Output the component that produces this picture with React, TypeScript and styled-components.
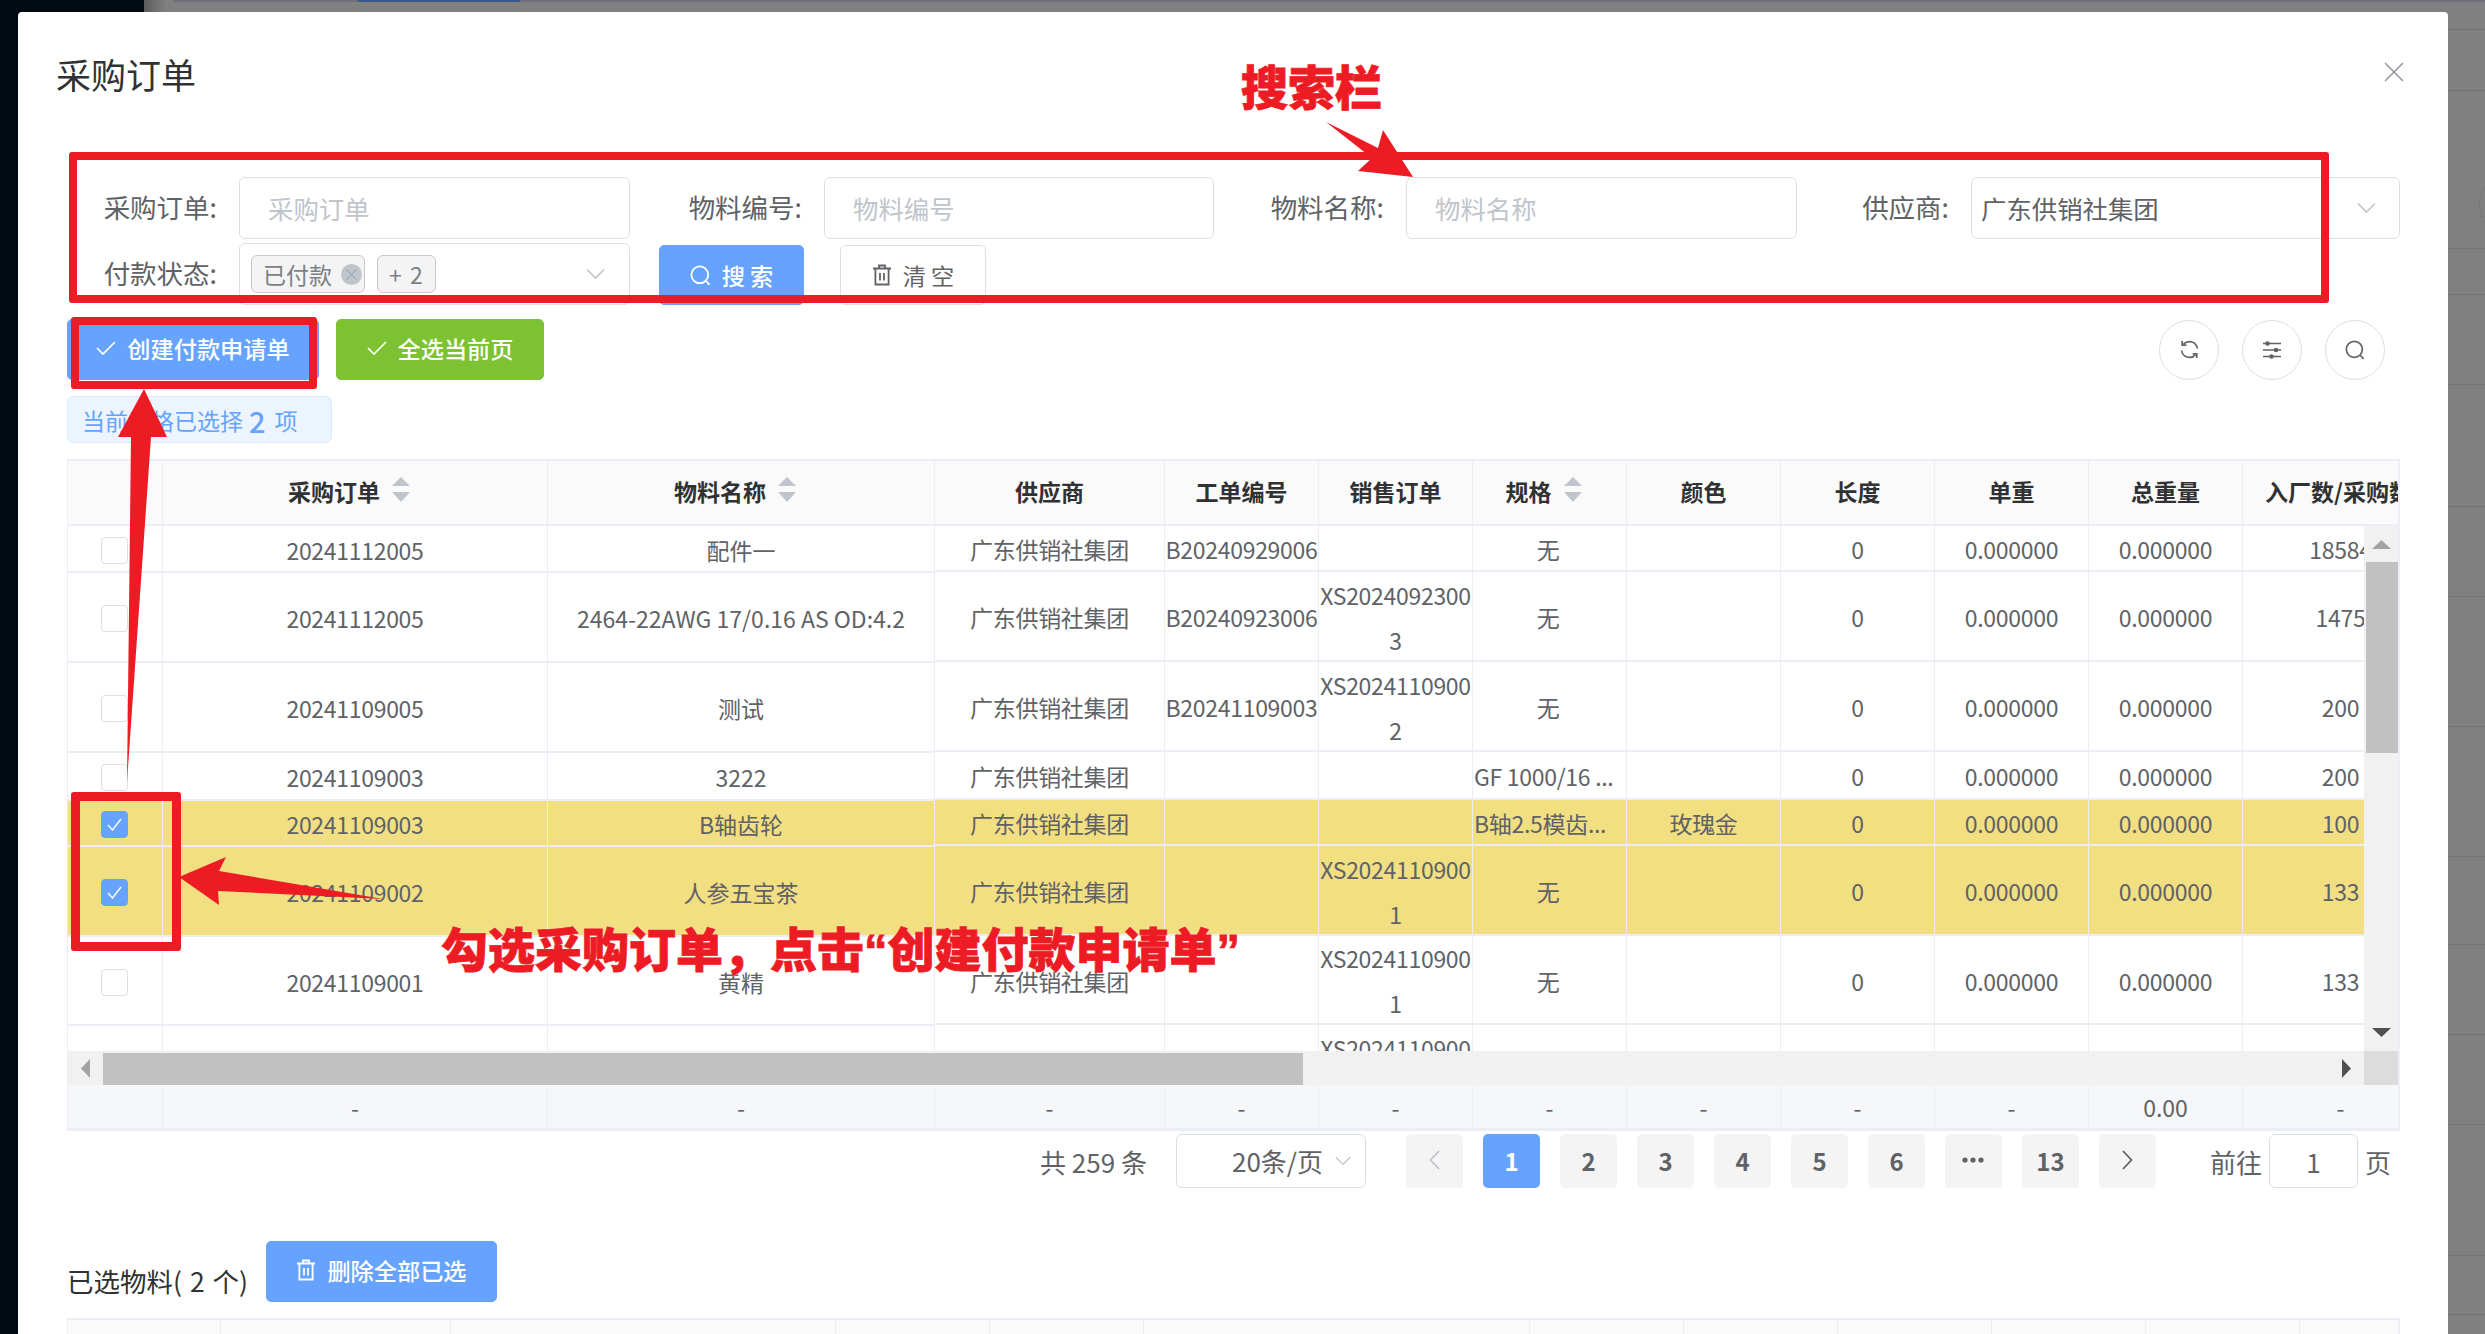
import React from "react";
import styled, { createGlobalStyle } from "styled-components";

const BLUE = "#66a3ff";
const LINE = "#ebeef5";
const TEXT = "#606266";
const RED = "#ed1c24";

const Global = createGlobalStyle`
  html, body { margin: 0; padding: 0; }
  body { font-family: "Noto Sans CJK SC", "Noto Sans", sans-serif; }
  * { box-sizing: border-box; }
`;

const Page = styled.div`
  position: relative;
  width: 2485px;
  height: 1334px;
  overflow: hidden;
  background: #808080;
`;
const DarkSide = styled.div`
  position: absolute;
  left: 0;
  top: 0;
  bottom: 0;
  width: 144px;
  background: #020a13;
`;
const SideShade = styled.div`
  position: absolute;
  left: 144px;
  top: 0;
  bottom: 0;
  width: 22px;
  background: linear-gradient(90deg, #5c5c5c, #808080);
`;
const TopStrip = styled.div`
  position: absolute;
  left: 173px;
  right: 0;
  top: 0;
  height: 2px;
  background: #6f6f78;
`;
const TopTab = styled.div`
  position: absolute;
  left: 358px;
  top: 0;
  width: 162px;
  height: 2px;
  background: #3a588c;
`;
const RightRows = styled.div`
  position: absolute;
  left: 2448px;
  right: 0;
  top: 0;
  display: flex;
  flex-direction: column;
`;
const RightRow = styled.div<{ $h: number }>`
  height: ${(p) => p.$h}px;
  border-bottom: 1px solid #737373;
`;
const GhostCircle = styled.div`
  position: absolute;
  left: 2479px;
  top: 175px;
  width: 60px;
  height: 60px;
  border-radius: 50%;
  border: 1px solid #757575;
`;

const Modal = styled.div`
  position: absolute;
  left: 18px;
  top: 12px;
  right: 37px;
  bottom: 0;
  background: #fff;
  border-radius: 4px 4px 0 0;
  padding: 0 48px 0 49px;
  overflow: hidden;
  display: flex;
  flex-direction: column;
`;
const ModalHeader = styled.div`
  flex: none;
  height: 165px;
  padding-top: 38px;
  display: flex;
  justify-content: space-between;
  align-items: flex-start;
`;
const Title = styled.h2`
  margin: 0 0 0 -11px;
  font-size: 35px;
  line-height: 48px;
  font-weight: 400;
  color: #303133;
`;
const CloseBtn = styled.button`
  margin: 12px -5px 0 0;
  padding: 0;
  border: 0;
  background: none;
  width: 21px;
  height: 21px;
  color: #909399;
  display: flex;
`;

const SearchForm = styled.form`
  flex: none;
  margin: 0;
  display: flex;
  flex-direction: column;
  gap: 4px;
`;
const FormRow = styled.div`
  display: flex;
  align-items: flex-end;
  height: 62px;
`;
const Field = styled.div<{ $w: number }>`
  width: ${(p) => p.$w}px;
  height: 62px;
  display: flex;
  align-items: center;
  flex: none;
`;
const FieldLabel = styled.label`
  flex: 1;
  text-align: right;
  padding: 0 22px 3px 0;
  font-size: 26.5px;
  color: ${TEXT};
  white-space: nowrap;
`;
const Control = styled.div<{ $w: number }>`
  flex: none;
  width: ${(p) => p.$w}px;
  height: 62px;
  border: 1.5px solid #dcdfe6;
  border-radius: 6px;
  background: #fff;
  font-size: 25.4px;
  display: flex;
  align-items: center;
  position: relative;
`;
const Placeholder = styled.span`
  padding-left: 28px;
  color: #c0c4cc;
`;
const SelectValue = styled.span`
  padding-left: 9px;
  color: ${TEXT};
  flex: 1;
`;
const Chevron = styled.span<{ $right: number }>`
  display: flex;
  position: absolute;
  right: ${(p) => p.$right}px;
  top: 50%;
  transform: translateY(-50%);
  color: #c0c4cc;
`;
const Tags = styled.div`
  display: flex;
  gap: 12px;
  padding-left: 11px;
`;
const Tag = styled.span`
  height: 38px;
  padding: 0 12px 0 11px;
  background: #f4f4f5;
  border: 1.5px solid #c8c9cc;
  border-radius: 6px;
  font-size: 23px;
  word-spacing: 3px;
  color: #7d7f86;
  display: flex;
  align-items: center;
  gap: 9px;
`;
const TagClose = styled.span`
  width: 21px;
  height: 21px;
  margin-right: -10px;
  border-radius: 50%;
  background: #c0c4cc;
  color: #909399;
  display: flex;
  align-items: center;
  justify-content: center;
`;

const Btn = styled.button<{ $bg: string; $fg?: string; $border?: string; $w: number }>`
  flex: none;
  width: ${(p) => p.$w}px;
  height: 61px;
  background: ${(p) => p.$bg};
  color: ${(p) => p.$fg ?? "#fff"};
  border: 1.5px solid ${(p) => p.$border ?? p.$bg};
  border-radius: 5px;
  font-family: inherit;
  font-size: 23.2px;
  font-weight: 500;
  padding: 0 0 3px;
  display: flex;
  align-items: center;
  justify-content: center;
  gap: 11px;
`;
const SearchBtn = styled(Btn)`
  margin-left: 29px;
  height: 60px;
  padding: 0;
`;
const ClearBtn = styled(Btn)`
  margin-left: 36px;
  height: 60px;
  padding: 0;
  font-weight: 400;
`;

const Toolbar = styled.div`
  flex: none;
  margin-top: 14px;
  height: 61px;
  display: flex;
  align-items: center;
  gap: 17px;
`;
const ToolIcons = styled.div`
  margin-left: auto;
  margin-right: 15px;
  display: flex;
  gap: 23px;
`;
const RoundBtn = styled.button`
  width: 60px;
  height: 60px;
  padding: 0;
  background: #fff;
  border: 1.5px solid #dcdfe6;
  border-radius: 50%;
  color: ${TEXT};
  display: flex;
  align-items: center;
  justify-content: center;
`;

const SelectedBadge = styled.div`
  flex: none;
  align-self: flex-start;
  margin-top: 16px;
  width: 265px;
  height: 47px;
  padding-left: 14px;
  background: #ecf5ff;
  border: 1.5px solid #d9ecff;
  border-radius: 6px;
  color: ${BLUE};
  font-size: 23px;
  display: flex;
  align-items: center;
  white-space: nowrap;
`;
const BadgeNum = styled.b`
  font-size: 29px;
  font-weight: 500;
  margin: 0 9px 0 6px;
`;

const TableWrap = styled.div`
  flex: none;
  margin-top: 16px;
  border-top: 2px solid ${LINE};
  border-left: 1px solid ${LINE};
  border-right: 2px solid ${LINE};
`;
const HeadRow = styled.div`
  display: flex;
  height: 65px;
  overflow: hidden;
  background: #fafafa;
  border-bottom: 2px solid ${LINE};
`;
const HeadCell = styled.div<{ $w: number }>`
  flex: none;
  width: ${(p) => p.$w}px;
  border-right: 1px solid ${LINE};
  padding-bottom: 3px;
  font-size: 23px;
  font-weight: 700;
  color: #303133;
  display: flex;
  align-items: center;
  justify-content: center;
  gap: 12px;
  white-space: nowrap;
  overflow: hidden;
`;
const SortHeadCell = styled(HeadCell)`
  padding-right: 12px;
`;
const LastHeadCell = styled(HeadCell)`
  justify-content: flex-start;
  padding-left: 22px;
`;
const Carets = styled.span`
  display: flex;
  flex-direction: column;
  gap: 6px;
  margin-top: -3px;
`;
const BodyArea = styled.div`
  display: flex;
  height: 525px;
`;
const Pane = styled.div<{ $w: number }>`
  flex: none;
  width: ${(p) => p.$w}px;
  overflow: hidden;
  display: flex;
  flex-direction: column;
`;
const Row = styled.div<{ $h: number; $on?: boolean }>`
  flex: none;
  display: flex;
  height: ${(p) => p.$h}px;
  background: ${(p) => (p.$on ? "#f2df82" : "#fff")};
  border-bottom: 2px solid ${LINE};
`;
const Cell = styled.div<{ $w: number; $left?: boolean }>`
  flex: none;
  width: ${(p) => p.$w}px;
  border-right: 1px solid ${LINE};
  padding: 3px ${(p) => (p.$left ? "0 0 1px" : "0 0")};
  font-size: 23px;
  line-height: 45px;
  color: ${TEXT};
  display: flex;
  flex-direction: column;
  align-items: ${(p) => (p.$left ? "flex-start" : "center")};
  justify-content: center;
  white-space: nowrap;
  overflow: hidden;
  letter-spacing: -0.3px;
`;
const NameCell = styled(Cell)`
  letter-spacing: 0;
`;
const SpecCell = styled(Cell)`
  padding-right: 3px;
`;
const CheckBox = styled.span<{ $on?: boolean }>`
  width: 27px;
  height: 27px;
  margin-right: 1px;
  border: 1.5px solid ${(p) => (p.$on ? BLUE : "#dcdfe6")};
  background: ${(p) => (p.$on ? BLUE : "#fff")};
  border-radius: 4px;
  display: flex;
  align-items: center;
  justify-content: center;
`;
const VScroll = styled.div`
  flex: none;
  width: 34px;
  background: #f1f1f1;
  display: flex;
  flex-direction: column;
  align-items: center;
`;
const VArrow = styled.span<{ $top: number }>`
  display: flex;
  height: ${(p) => p.$top}px;
  align-items: center;
  justify-content: center;
  flex: none;
`;
const VThumb = styled.div`
  flex: none;
  align-self: flex-end;
  width: 32px;
  height: 191px;
  background: #c1c1c1;
`;
const VGap = styled.div`
  flex: 1;
`;
const HScroll = styled.div`
  display: flex;
  align-items: stretch;
  height: 34px;
  background: #f1f1f1;
`;
const HArrow = styled.span<{ $w: number }>`
  flex: none;
  width: ${(p) => p.$w}px;
  display: flex;
  align-items: center;
  justify-content: center;
`;
const HThumb = styled.div`
  flex: none;
  width: 1200px;
  margin-top: 2px;
  background: #c1c1c1;
`;
const HGap = styled.div`
  flex: 1;
`;
const HCorner = styled.div`
  flex: none;
  width: 34px;
  background: #dcdcdc;
`;
const SumRow = styled.div`
  display: flex;
  height: 46px;
  overflow: hidden;
  background: #f5f7fa;
  border-bottom: 3px solid ${LINE};
`;
const SumCell = styled(HeadCell)`
  font-weight: 400;
  color: ${TEXT};
  padding: 1px 0 0;
`;

const Pagination = styled.div`
  flex: none;
  margin-top: 4px;
  padding: 0 9px 2px 0;
  height: 54px;
  display: flex;
  justify-content: flex-end;
  align-items: center;
  font-size: 26px;
  color: ${TEXT};
`;
const SizeSelect = styled.div`
  width: 190px;
  height: 54px;
  margin: 0 40px 0 29px;
  border: 1.5px solid #dcdfe6;
  border-radius: 6px;
  padding: 0 0 2px 55px;
  display: flex;
  align-items: center;
  position: relative;
  white-space: nowrap;
`;
const Pages = styled.div`
  display: flex;
  gap: 20px;
`;
const PageBtn = styled.button<{ $on?: boolean; $off?: boolean }>`
  width: 57px;
  height: 54px;
  padding: 0 0 2px;
  border: 0;
  border-radius: 5px;
  background: ${(p) => (p.$on ? BLUE : "#f4f4f5")};
  color: ${(p) => (p.$on ? "#fff" : p.$off ? "#c0c4cc" : TEXT)};
  font-family: inherit;
  font-size: 24px;
  font-weight: 700;
  display: flex;
  align-items: center;
  justify-content: center;
`;
const Jumper = styled.div`
  margin-left: 54px;
  display: flex;
  align-items: center;
  gap: 7px;
`;
const JumpInput = styled.div`
  width: 89px;
  height: 54px;
  border: 1.5px solid #dcdfe6;
  border-radius: 6px;
  display: flex;
  align-items: center;
  justify-content: center;
`;

const SelectedHead = styled.div`
  flex: none;
  margin-top: 52px;
  display: flex;
  gap: 19px;
  align-items: flex-start;
`;
const SelectedLabel = styled.div`
  width: 180px;
  margin-top: 19px;
  font-size: 26.5px;
  line-height: 42px;
  word-spacing: 2px;
  color: #303133;
  white-space: nowrap;
`;
const SecondTable = styled.div`
  flex: none;
  margin-top: 16px;
  height: 40px;
  display: flex;
  background: #fafafa;
  border-top: 2px solid ${LINE};
  border-left: 1px solid ${LINE};
  border-right: 2px solid ${LINE};
`;
const SecondCol = styled.div<{ $w: number }>`
  flex: none;
  width: ${(p) => p.$w}px;
  border-right: 1px solid ${LINE};
`;

const MarkBox = styled.div`
  position: absolute;
  border: 8px solid ${RED};
  border-radius: 3px;
  pointer-events: none;
`;
const SearchMark = styled(MarkBox)`
  left: 69px;
  top: 152px;
  width: 2260px;
  height: 151px;
`;
const CreateMark = styled(MarkBox)`
  left: 71px;
  top: 317px;
  width: 246px;
  height: 72px;
`;
const CheckMark = styled(MarkBox)`
  left: 71px;
  top: 792px;
  width: 110px;
  height: 159px;
  border-width: 9px;
`;
const MarkText = styled.div`
  position: absolute;
  color: ${RED};
  font-family: "Liberation Sans", "Noto Sans CJK SC", sans-serif;
  font-size: 47px;
  line-height: 56px;
  font-weight: 900;
  white-space: nowrap;
  -webkit-text-stroke: 0.8px ${RED};
  text-shadow: 0 0 2px rgba(255, 255, 255, 0.9);
`;
const SearchNote = styled(MarkText)`
  left: 1241px;
  top: 61px;
`;
const TickNote = styled(MarkText)`
  left: 441px;
  top: 923px;
`;
const ArrowLayer = styled.svg`
  position: absolute;
  left: 0;
  top: 0;
  pointer-events: none;
`;

const IconCheck = ({ w = 20, h = 14 }: { w?: number; h?: number }) => (
  <svg width={w} height={h} viewBox="0 0 20 14" fill="none" stroke="currentColor" strokeWidth="1.7">
    <path d="M1 7l6 6L19 1" />
  </svg>
);
const IconSearch = ({ s = 21 }: { s?: number }) => (
  <svg width={s} height={s} viewBox="0 0 21 21" fill="none" stroke="currentColor" strokeWidth="1.8">
    <circle cx="9.8" cy="9.8" r="8.4" />
    <path d="M16 16l3.6 3.8" />
  </svg>
);
const IconTrash = () => (
  <svg width="20" height="22" viewBox="0 0 20 22" fill="none" stroke="currentColor" strokeWidth="1.8">
    <path d="M1 4.5h18M7 4.5V1.5h6v3M3.4 4.5v16h13.2v-16M8 9v7.5M12 9v7.5" />
  </svg>
);
const IconRefresh = () => (
  <svg width="19" height="19" viewBox="0 0 19 19" fill="none" stroke="currentColor" strokeWidth="1.7">
    <path d="M3.6 4.2A8 8 0 0 1 17.4 8.5" />
    <path d="M15.4 14.8A8 8 0 0 1 1.6 10.5" />
    <path d="M2.2 1v4.2h4.2M16.8 18v-4.2h-4.2" />
  </svg>
);
const IconSliders = () => (
  <svg width="18" height="18" viewBox="0 0 18 18" fill="currentColor" stroke="currentColor" strokeWidth="1.4">
    <path d="M0 2.5h18M0 9h18M0 15.5h18" fill="none" />
    <circle cx="4.5" cy="2.5" r="1.6" />
    <circle cx="13" cy="9" r="1.6" />
    <circle cx="8.5" cy="15.5" r="1.6" />
  </svg>
);
const IconChevronDown = ({ w = 19, h = 11 }: { w?: number; h?: number }) => (
  <svg width={w} height={h} viewBox="0 0 19 11" fill="none" stroke="currentColor" strokeWidth="1.6">
    <path d="M1 1l8.5 8.5L18 1" />
  </svg>
);
const IconX = ({ s }: { s: number }) => (
  <svg width={s} height={s} viewBox="0 0 20 20" fill="none" stroke="currentColor" strokeWidth="1.5">
    <path d="M1 1l18 18M19 1L1 19" />
  </svg>
);
const Triangle = ({ dir, color, w = 19, h = 9 }: { dir: string; color: string; w?: number; h?: number }) => {
  const horizontal = dir === "left" || dir === "right";
  const pts: Record<string, string> = {
    up: `0,${h} ${w},${h} ${w / 2},0`,
    down: `0,0 ${w},0 ${w / 2},${h}`,
    left: `${h},0 ${h},${w} 0,${w / 2}`,
    right: `0,0 0,${w} ${h},${w / 2}`,
  };
  return (
    <svg width={horizontal ? h : w} height={horizontal ? w : h}>
      <polygon points={pts[dir]} fill={color} />
    </svg>
  );
};
const SortCarets = () => (
  <Carets>
    <Triangle dir="up" color="#c0c4cc" w={18} h={9} />
    <Triangle dir="down" color="#c0c4cc" w={18} h={10} />
  </Carets>
);

const FIXED = [95, 385, 387];
const MAIN = [230, 154, 154, 154, 154, 154, 154, 196];

const HEADS = [
  { t: "", w: 95 },
  { t: "采购订单", w: 385, s: true },
  { t: "物料名称", w: 387, s: true },
  { t: "供应商", w: 230 },
  { t: "工单编号", w: 154 },
  { t: "销售订单", w: 154 },
  { t: "规格", w: 154, s: true },
  { t: "颜色", w: 154 },
  { t: "长度", w: 154 },
  { t: "单重", w: 154 },
  { t: "总重量", w: 154 },
];

type R = {
  po: string;
  name: string;
  work: string;
  sale: string[];
  spec: string;
  color: string;
  qty: string;
  fh: number;
  mh: number;
  on?: boolean;
};
const ROWS: R[] = [
  { po: "20241112005", name: "配件一", work: "B20240929006", sale: [], spec: "无", color: "", qty: "18584", fh: 47, mh: 46 },
  { po: "20241112005", name: "2464-22AWG 17/0.16 AS OD:4.2", work: "B20240923006", sale: ["XS2024092300", "3"], spec: "无", color: "", qty: "1475", fh: 90, mh: 90 },
  { po: "20241109005", name: "测试", work: "B20241109003", sale: ["XS2024110900", "2"], spec: "无", color: "", qty: "200", fh: 90, mh: 90 },
  { po: "20241109003", name: "3222", work: "", sale: [], spec: "GF 1000/16 ...", color: "", qty: "200", fh: 48, mh: 48 },
  { po: "20241109003", name: "B轴齿轮", work: "", sale: [], spec: "B轴2.5模齿...", color: "玫瑰金", qty: "100", fh: 46, mh: 46, on: true },
  { po: "20241109002", name: "人参五宝茶", work: "", sale: ["XS2024110900", "1"], spec: "无", color: "", qty: "133", fh: 90, mh: 90, on: true },
  { po: "20241109001", name: "黄精", work: "", sale: ["XS2024110900", "1"], spec: "无", color: "", qty: "133", fh: 89, mh: 89 },
];
const RIGHT_ROWS = [30, 61, 158, 46, 90, 122, 90, 130, 130, 88, 90, 90, 131, 59];
const SECOND_COLS = [153, 230, 385, 154, 154, 386, 154, 154, 154, 154, 154, 100];

const App = () => (
  <Page>
    <Global />
    <DarkSide />
    <SideShade />
    <TopStrip />
    <TopTab />
    <RightRows>
      {RIGHT_ROWS.map((h, i) => (
        <RightRow key={i} $h={h} />
      ))}
    </RightRows>
    <GhostCircle />

    <Modal>
      <ModalHeader>
        <Title>采购订单</Title>
        <CloseBtn type="button">
          <IconX s={20} />
        </CloseBtn>
      </ModalHeader>

      <SearchForm>
        <FormRow>
          <Field $w={563}>
            <FieldLabel>采购订单:</FieldLabel>
            <Control $w={391}>
              <Placeholder>采购订单</Placeholder>
            </Control>
          </Field>
          <Field $w={584}>
            <FieldLabel>物料编号:</FieldLabel>
            <Control $w={390}>
              <Placeholder>物料编号</Placeholder>
            </Control>
          </Field>
          <Field $w={583}>
            <FieldLabel>物料名称:</FieldLabel>
            <Control $w={391}>
              <Placeholder>物料名称</Placeholder>
            </Control>
          </Field>
          <Field $w={603}>
            <FieldLabel>供应商:</FieldLabel>
            <Control $w={429}>
              <SelectValue>广东供销社集团</SelectValue>
              <Chevron $right={23}>
                <IconChevronDown />
              </Chevron>
            </Control>
          </Field>
        </FormRow>
        <FormRow>
          <Field $w={563}>
            <FieldLabel>付款状态:</FieldLabel>
            <Control $w={391}>
              <Tags>
                <Tag>
                  已付款
                  <TagClose>
                    <IconX s={11} />
                  </TagClose>
                </Tag>
                <Tag>+ 2</Tag>
              </Tags>
              <Chevron $right={24}>
                <IconChevronDown />
              </Chevron>
            </Control>
          </Field>
          <SearchBtn type="button" $bg={BLUE} $w={145}>
            <IconSearch />
            <span>搜 索</span>
          </SearchBtn>
          <ClearBtn type="button" $bg="#fff" $fg={TEXT} $border="#dcdfe6" $w={146}>
            <IconTrash />
            <span>清 空</span>
          </ClearBtn>
        </FormRow>
      </SearchForm>

      <Toolbar>
        <Btn type="button" $bg={BLUE} $w={252}>
          <IconCheck />
          <span>创建付款申请单</span>
        </Btn>
        <Btn type="button" $bg="#7dc232" $w={208}>
          <IconCheck />
          <span>全选当前页</span>
        </Btn>
        <ToolIcons>
          <RoundBtn type="button">
            <IconRefresh />
          </RoundBtn>
          <RoundBtn type="button">
            <IconSliders />
          </RoundBtn>
          <RoundBtn type="button">
            <IconSearch s={20} />
          </RoundBtn>
        </ToolIcons>
      </Toolbar>

      <SelectedBadge>
        当前表格已选择 <BadgeNum>2</BadgeNum> 项
      </SelectedBadge>

      <TableWrap>
        <HeadRow>
          {HEADS.map((h, i) =>
            h.s ? (
              <SortHeadCell key={i} $w={h.w}>
                {h.t}
                <SortCarets />
              </SortHeadCell>
            ) : (
              <HeadCell key={i} $w={h.w}>
                {h.t}
              </HeadCell>
            )
          )}
          <LastHeadCell $w={196}>入厂数/采购数量</LastHeadCell>
        </HeadRow>
        <BodyArea>
          <Pane $w={867}>
            {ROWS.map((r, i) => (
              <Row key={i} $h={r.fh} $on={r.on}>
                <Cell $w={FIXED[0]}>
                  <CheckBox $on={r.on}>
                    {r.on && (
                      <svg width="15" height="13" viewBox="0 0 15 13" fill="none" stroke="#fff" strokeWidth="1.4">
                        <path d="M1 7l4.5 5L14 1" />
                      </svg>
                    )}
                  </CheckBox>
                </Cell>
                <Cell $w={FIXED[1]}>{r.po}</Cell>
                <NameCell $w={FIXED[2]}>{r.name}</NameCell>
              </Row>
            ))}
            <Row $h={90}>
              <Cell $w={FIXED[0]} />
              <Cell $w={FIXED[1]} />
              <Cell $w={FIXED[2]} />
            </Row>
          </Pane>
          <Pane $w={1429}>
            {ROWS.map((r, i) => (
              <Row key={i} $h={r.mh} $on={r.on}>
                <Cell $w={MAIN[0]}>广东供销社集团</Cell>
                <Cell $w={MAIN[1]}>{r.work}</Cell>
                <Cell $w={MAIN[2]}>
                  {r.sale.map((s) => (
                    <span key={s}>{s}</span>
                  ))}
                </Cell>
                {r.spec.length > 1 ? (
                  <Cell $w={MAIN[3]} $left>
                    {r.spec}
                  </Cell>
                ) : (
                  <SpecCell $w={MAIN[3]}>{r.spec}</SpecCell>
                )}
                <Cell $w={MAIN[4]}>{r.color}</Cell>
                <Cell $w={MAIN[5]}>0</Cell>
                <Cell $w={MAIN[6]}>0.000000</Cell>
                <Cell $w={MAIN[6]}>0.000000</Cell>
                <Cell $w={MAIN[7]}>{r.qty}</Cell>
              </Row>
            ))}
            <Row $h={90}>
              <Cell $w={MAIN[0]} />
              <Cell $w={MAIN[1]} />
              <Cell $w={MAIN[2]}>
                <span>XS2024110900</span>
                <span>1</span>
              </Cell>
              <Cell $w={MAIN[3]} />
              <Cell $w={MAIN[4]} />
              <Cell $w={MAIN[5]} />
              <Cell $w={MAIN[6]} />
              <Cell $w={MAIN[6]} />
              <Cell $w={MAIN[7]} />
            </Row>
          </Pane>
          <VScroll>
            <VArrow $top={36}>
              <Triangle dir="up" color="#a3a3a3" />
            </VArrow>
            <VThumb />
            <VGap />
            <VArrow $top={38}>
              <Triangle dir="down" color="#505050" />
            </VArrow>
          </VScroll>
        </BodyArea>
        <HScroll>
          <HArrow $w={35}>
            <Triangle dir="left" color="#a3a3a3" />
          </HArrow>
          <HThumb />
          <HGap />
          <HArrow $w={36}>
            <Triangle dir="right" color="#505050" />
          </HArrow>
          <HCorner />
        </HScroll>
        <SumRow>
          {HEADS.map((h, i) => (
            <SumCell key={i} $w={h.w}>
              {i === 0 ? "" : i === 10 ? "0.00" : "-"}
            </SumCell>
          ))}
          <SumCell $w={196}>-</SumCell>
        </SumRow>
      </TableWrap>

      <Pagination>
        <span>共 259 条</span>
        <SizeSelect>
          20条/页
          <Chevron $right={14}>
            <IconChevronDown w={16} h={10} />
          </Chevron>
        </SizeSelect>
        <Pages>
          <PageBtn type="button" $off>
            <svg width="11" height="20" viewBox="0 0 11 20" fill="none" stroke="currentColor" strokeWidth="1.8">
              <path d="M10 1L1.5 10l8.5 9" />
            </svg>
          </PageBtn>
          <PageBtn type="button" $on>
            1
          </PageBtn>
          <PageBtn type="button">2</PageBtn>
          <PageBtn type="button">3</PageBtn>
          <PageBtn type="button">4</PageBtn>
          <PageBtn type="button">5</PageBtn>
          <PageBtn type="button">6</PageBtn>
          <PageBtn type="button">
            <svg width="24" height="6" viewBox="0 0 24 6" fill="currentColor">
              <circle cx="4" cy="3" r="2.6" />
              <circle cx="12" cy="3" r="2.6" />
              <circle cx="20" cy="3" r="2.6" />
            </svg>
          </PageBtn>
          <PageBtn type="button">13</PageBtn>
          <PageBtn type="button">
            <svg width="11" height="20" viewBox="0 0 11 20" fill="none" stroke="currentColor" strokeWidth="1.8">
              <path d="M1 1l8.5 9L1 19" />
            </svg>
          </PageBtn>
        </Pages>
        <Jumper>
          <span>前往</span>
          <JumpInput>1</JumpInput>
          <span>页</span>
        </Jumper>
      </Pagination>

      <SelectedHead>
        <SelectedLabel>已选物料( 2 个)</SelectedLabel>
        <Btn type="button" $bg={BLUE} $w={231}>
          <IconTrash />
          <span>删除全部已选</span>
        </Btn>
      </SelectedHead>
      <SecondTable>
        {SECOND_COLS.map((w, i) => (
          <SecondCol key={i} $w={w} />
        ))}
      </SecondTable>
    </Modal>

    <SearchMark />
    <CreateMark />
    <CheckMark />
    <ArrowLayer width="2485" height="1334" viewBox="0 0 2485 1334">
      <polygon points="127,782 131,437 118,437 144,389 167,437 151,437" fill={RED} />
      <polygon points="179,877 226,857 219,871 383,899 218,891 219,905" fill={RED} />
      <polygon points="1326,122 1378,148 1383,130 1413,177 1358,171 1372,158" fill={RED} />
    </ArrowLayer>
    <SearchNote>搜索栏</SearchNote>
    <TickNote>勾选采购订单，点击“创建付款申请单”</TickNote>
  </Page>
);

export default App;
